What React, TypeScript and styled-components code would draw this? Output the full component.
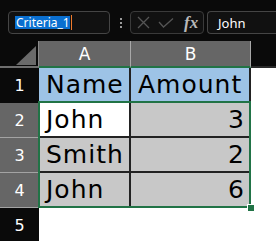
import React from "react";
import styled, { createGlobalStyle } from "styled-components";

const GlobalStyle = createGlobalStyle`
  html, body {
    margin: 0;
    padding: 0;
    background: #0a0a0a;
    overflow: hidden;
  }
  #root {
    width: 276px;
    height: 241px;
    overflow: hidden;
  }
`;

const Toolbar = styled.div`
  display: flex;
  align-items: center;
  height: 41px;
  box-sizing: border-box;
  padding: 11px 0 7px 8px;
  background: #0a0a0a;
  overflow: hidden;
  font-family: "Noto Sans", "Open Sans", sans-serif;
  font-size: 12px;
  color: #fff;
`;

const Box = styled.div<{ $width: number }>`
  flex: none;
  width: ${(p) => p.$width}px;
  height: 23px;
  box-sizing: border-box;
  border: 1px solid #454545;
  border-radius: 4px;
  background: #111;
  display: flex;
  align-items: center;
`;

const NameBox = styled(Box)`
  padding-left: 6px;
`;

const Selected = styled.span`
  position: relative;
  background: #0a6fd0;
  color: #fff;
  line-height: 13px;
  padding: 0 0 0 1px;

  &::after {
    content: "";
    position: absolute;
    right: -2px;
    top: -1px;
    width: 1px;
    height: 15px;
    background: #f07a2c;
  }
`;

const Dots = styled.div`
  flex: none;
  display: flex;
  flex-direction: column;
  gap: 2px;
  margin: 0 8px 0 10px;

  span {
    width: 2px;
    height: 2px;
    background: #9a9a9a;
  }
`;

const FuncBox = styled(Box)`
  gap: 8px;
  padding-left: 6px;
  border-color: #3a3a3a;
`;

const Fx = styled.span`
  font-family: "Liberation Serif", "DejaVu Serif", serif;
  font-style: italic;
  font-weight: bold;
  font-size: 17px;
  color: #b8b8b8;
  margin-left: 2px;
  line-height: 1;
`;

const FormulaBox = styled(Box)`
  margin-left: 3px;
  padding-left: 10px;
  font-size: 13px;
  border-right: none;
  border-radius: 4px 0 0 4px;
`;

const Sheet = styled.div`
  position: relative;
  display: grid;
  grid-template-columns: 39px 92px 120px 1fr;
  grid-template-rows: 27px repeat(5, 35px);
  font-family: "DejaVu Sans", Verdana, sans-serif;
  background: #fff;
`;

const Corner = styled.div`
  background: #0a0a0a;
  border-bottom: 2px solid #6e6e6e;
  border-right: 1px solid #8a8a8a;
  display: flex;
  justify-content: flex-end;
  align-items: flex-end;
  padding: 0 2px 1px 0;
`;

const ColHeader = styled.div`
  background: #666;
  color: #fff;
  font-size: 17px;
  display: flex;
  align-items: center;
  justify-content: center;
  border-right: 1px solid #a8a8a8;
  border-bottom: 2px solid #217346;
`;

const HeaderFill = styled.div`
  background: #0a0a0a;
  border-bottom: 2px solid #2a2a2a;
`;

const RowHeader = styled.div<{ $selected?: boolean }>`
  background: ${(p) => (p.$selected ? "#666" : "#0a0a0a")};
  color: #fff;
  font-size: 16px;
  display: flex;
  align-items: center;
  justify-content: center;
  box-sizing: border-box;
  border-bottom: 1px solid ${(p) => (p.$selected ? "#a3a3a3" : "#0a0a0a")};
`;

type Fill = "blue" | "white" | "gray";

const fills: Record<Fill, string> = {
  blue: "#9dc3e6",
  white: "#ffffff",
  gray: "#c8c8c8",
};

const Cell = styled.div<{ $fill: Fill; $right?: boolean }>`
  background: ${(p) => fills[p.$fill]};
  color: #000;
  font-size: 25px;
  letter-spacing: 1px;
  display: flex;
  align-items: center;
  justify-content: ${(p) => (p.$right ? "flex-end" : "flex-start")};
  padding: 0 4px 0 7px;
  border-right: 2px solid #222;
  border-bottom: 2px solid #222;
  white-space: nowrap;
`;

const Blank = styled.div`
  background: #fff;
`;

const Selection = styled.div`
  position: absolute;
  top: 60px;
  left: 38px;
  width: 213px;
  height: 107px;
  box-sizing: border-box;
  border: 2px solid #217346;
  pointer-events: none;
`;

const FillHandle = styled.div`
  position: absolute;
  right: -5px;
  bottom: -5px;
  width: 6px;
  height: 6px;
  background: #217346;
  box-shadow: 0 0 0 1px #fff;
`;

const rows: { name: string; amount: number }[] = [
  { name: "John", amount: 3 },
  { name: "Smith", amount: 2 },
  { name: "John", amount: 6 },
];

export default function App() {
  return (
    <>
      <GlobalStyle />
      <Toolbar>
        <NameBox $width={102}>
          <Selected>Criteria_1</Selected>
        </NameBox>
        <Dots>
          <span />
          <span />
          <span />
        </Dots>
        <FuncBox $width={74}>
          <svg width="13" height="13" viewBox="0 0 13 13">
            <path d="M1 1 L12 12 M12 1 L1 12" stroke="#555" strokeWidth="1.3" fill="none" />
          </svg>
          <svg width="16" height="10" viewBox="0 0 16 10">
            <path d="M1 4 L5.5 9 L15 0.5" stroke="#555" strokeWidth="1.3" fill="none" />
          </svg>
          <Fx>fx</Fx>
        </FuncBox>
        <FormulaBox $width={90}>John</FormulaBox>
      </Toolbar>
      <Sheet>
        <Corner>
          <svg width="20" height="19" viewBox="0 0 20 19">
            <polygon points="0,19 20,19 20,0" fill="#6a6a6a" />
          </svg>
        </Corner>
        <ColHeader>A</ColHeader>
        <ColHeader>B</ColHeader>
        <HeaderFill />

        <RowHeader>1</RowHeader>
        <Cell $fill="blue">Name</Cell>
        <Cell $fill="blue">Amount</Cell>
        <Blank />

        {rows.map((r, i) => (
          <React.Fragment key={i}>
            <RowHeader $selected>{i + 2}</RowHeader>
            <Cell $fill={i === 0 ? "white" : "gray"}>{r.name}</Cell>
            <Cell $fill="gray" $right>
              {r.amount}
            </Cell>
            <Blank />
          </React.Fragment>
        ))}

        <RowHeader>5</RowHeader>
        <Blank />
        <Blank />
        <Blank />

        <Selection>
          <FillHandle />
        </Selection>
      </Sheet>
    </>
  );
}
